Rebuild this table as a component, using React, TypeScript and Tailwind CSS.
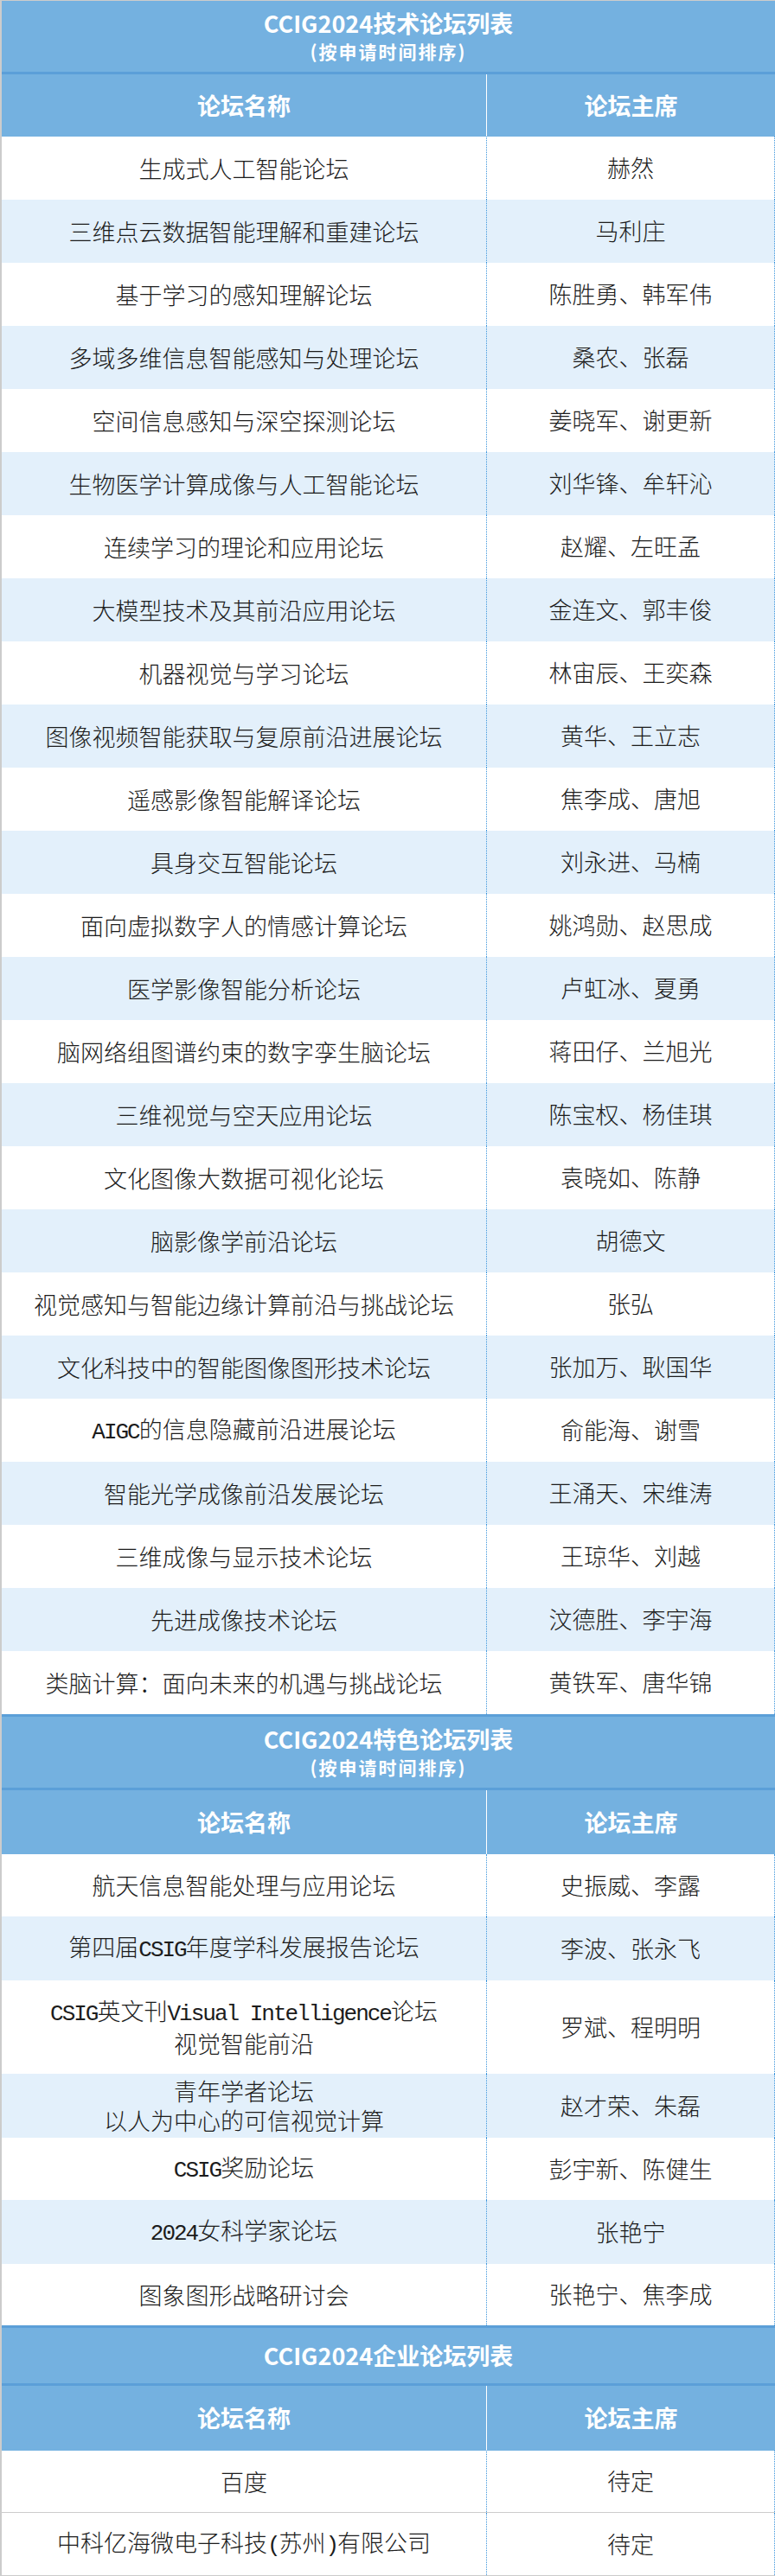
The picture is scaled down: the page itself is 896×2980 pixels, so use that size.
import React from "react"

type Row = { name: string[]; chair: string; h?: string }

const tech: Row[] = [
  ["生成式人工智能论坛", "赫然"],
  ["三维点云数据智能理解和重建论坛", "马利庄"],
  ["基于学习的感知理解论坛", "陈胜勇、韩军伟"],
  ["多域多维信息智能感知与处理论坛", "桑农、张磊"],
  ["空间信息感知与深空探测论坛", "姜晓军、谢更新"],
  ["生物医学计算成像与人工智能论坛", "刘华锋、牟轩沁"],
  ["连续学习的理论和应用论坛", "赵耀、左旺孟"],
  ["大模型技术及其前沿应用论坛", "金连文、郭丰俊"],
  ["机器视觉与学习论坛", "林宙辰、王奕森"],
  ["图像视频智能获取与复原前沿进展论坛", "黄华、王立志"],
  ["遥感影像智能解译论坛", "焦李成、唐旭"],
  ["具身交互智能论坛", "刘永进、马楠"],
  ["面向虚拟数字人的情感计算论坛", "姚鸿勋、赵思成"],
  ["医学影像智能分析论坛", "卢虹冰、夏勇"],
  ["脑网络组图谱约束的数字孪生脑论坛", "蒋田仔、兰旭光"],
  ["三维视觉与空天应用论坛", "陈宝权、杨佳琪"],
  ["文化图像大数据可视化论坛", "袁晓如、陈静"],
  ["脑影像学前沿论坛", "胡德文"],
  ["视觉感知与智能边缘计算前沿与挑战论坛", "张弘"],
  ["文化科技中的智能图像图形技术论坛", "张加万、耿国华"],
  ["AIGC的信息隐藏前沿进展论坛", "俞能海、谢雪"],
  ["智能光学成像前沿发展论坛", "王涌天、宋维涛"],
  ["三维成像与显示技术论坛", "王琼华、刘越"],
  ["先进成像技术论坛", "汶德胜、李宇海"],
  ["类脑计算：面向未来的机遇与挑战论坛", "黄铁军、唐华锦"],
].map(([n, c]) => ({ name: [n], chair: c, h: "h-[73px]" }))

const special: Row[] = [
  { name: ["航天信息智能处理与应用论坛"], chair: "史振威、李露", h: "h-[72px]" },
  { name: ["第四届CSIG年度学科发展报告论坛"], chair: "李波、张永飞", h: "h-[74px]" },
  { name: ["CSIG英文刊Visual Intelligence论坛", "视觉智能前沿"], chair: "罗斌、程明明", h: "h-[108px]" },
  { name: ["青年学者论坛", "以人为中心的可信视觉计算"], chair: "赵才荣、朱磊", h: "h-[74px]" },
  { name: ["CSIG奖励论坛"], chair: "彭宇新、陈健生", h: "h-[72px]" },
  { name: ["2024女科学家论坛"], chair: "张艳宁", h: "h-[74px]" },
  { name: ["图象图形战略研讨会"], chair: "张艳宁、焦李成", h: "h-[71px]" },
]

const company: Row[] = [
  { name: ["百度"], chair: "待定", h: "h-[72px]" },
  { name: ["中科亿海微电子科技(苏州)有限公司"], chair: "待定", h: "h-[73px]" },
]

// latin runs are half-width in the original, so set them in a mono face
function Txt({ s }: { s: string }) {
  const parts = s.split(/([\x21-\x7e][\x20-\x7e]*[\x21-\x7e]|[\x21-\x7e])/)
  return (
    <>
      {parts.map((p, i) =>
        /^[\x20-\x7e]+$/.test(p) ? (
          <span key={i} className="font-['Liberation_Mono',monospace] text-[26px] tracking-[-2px] whitespace-pre">
            {p}
          </span>
        ) : (
          <span key={i}>{p}</span>
        )
      )}
    </>
  )
}

function Title({ title, sub, top, h }: { title: string; sub?: string; top?: boolean; h: string }) {
  return (
    <div
      className={`${h} ${top ? "border-t-[3px]" : ""} border-b-[3px] border-[#5b9fd8] bg-[#74b1e0] flex flex-col items-center justify-center text-white font-bold`}
    >
      <div className="text-[27px] leading-[34px]">{title}</div>
      {sub && <div className="text-[21px] leading-[30px] tracking-[2px]">{sub}</div>}
    </div>
  )
}

function Head({ h }: { h: string }) {
  return (
    <div className={`${h} flex bg-[#74b1e0] text-white font-bold text-[27px]`}>
      <div className="w-[560px] flex items-center justify-center">论坛名称</div>
      <div className="flex-1 flex items-center justify-center border-l border-white">论坛主席</div>
    </div>
  )
}

function Rows({ rows, lined }: { rows: Row[]; lined?: boolean }) {
  return (
    <>
      {rows.map((r, i) => (
        <div
          key={i}
          className={`${r.h} flex ${lined ? "bg-white border-b border-[#cccccc]" : i % 2 ? "bg-[#e3f0fb]" : "bg-white"}`}
        >
          <div className="w-[560px] flex flex-col items-center justify-center text-center leading-[34px]">
            {r.name.map((n, j) => (
              <div key={j}>
                <Txt s={n} />
              </div>
            ))}
          </div>
          <div className="flex-1 flex items-center justify-center border-l border-r border-dotted border-[#3d96dc]">
            {r.chair}
          </div>
        </div>
      ))}
    </>
  )
}

export default function App() {
  return (
    <div className="w-[896px] bg-white font-['Noto_Sans_CJK_SC',sans-serif]">
      <div className="border-l-2 border-t border-[#cccccc] text-[27px] text-[#1c1c1c] font-light">
        <Title title="CCIG2024技术论坛列表" sub="(按申请时间排序)" h="h-[85px]" />
        <Head h="h-[72px]" />
        <Rows rows={tech} />

        <Title title="CCIG2024特色论坛列表" sub="(按申请时间排序)" top h="h-[88px]" />
        <Head h="h-[74px]" />
        <Rows rows={special} />

        <Title title="CCIG2024企业论坛列表" top h="h-[70px]" />
        <Head h="h-[75px]" />
        <Rows rows={company} lined />
      </div>
    </div>
  )
}
